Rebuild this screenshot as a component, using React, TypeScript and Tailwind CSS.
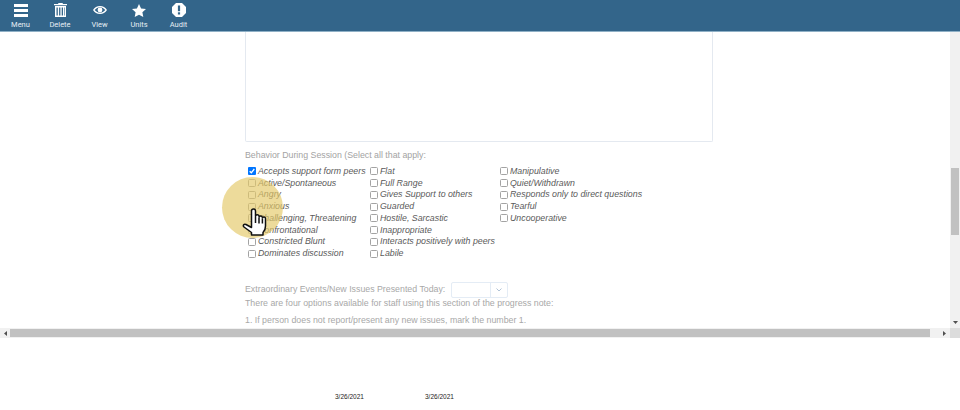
const columns = [
  { width: 'w-[122px]', items: ['Accepts support form peers', 'Active/Spontaneous', 'Angry', 'Anxious', 'Challenging, Threatening', 'Confrontational', 'Constricted Blunt', 'Dominates discussion'] },
  { width: 'w-[130px]', items: ['Flat', 'Full Range', 'Gives Support to others', 'Guarded', 'Hostile, Sarcastic', 'Inappropriate', 'Interacts positively with peers', 'Labile'] },
  { width: 'w-[160px]', items: ['Manipulative', 'Quiet/Withdrawn', 'Responds only to direct questions', 'Tearful', 'Uncooperative'] },
];

function MenuIcon() {
  return (
    <svg width="14" height="13" viewBox="0 0 14 13" fill="white">
      <rect x="0" y="0" width="14" height="3" />
      <rect x="0" y="5" width="14" height="3" />
      <rect x="0" y="10" width="14" height="3" />
    </svg>
  );
}

function TrashIcon() {
  return (
    <svg width="13" height="14" viewBox="0 0 13 14" fill="white">
      <path d="M4.500 0h4l.5 1h4v1.200H0V1h4z" />
      <path fillRule="evenodd" d="M1 3h11v11H1zM2.500 4.500v8h1.300v-8zM5.100 4.500v8h1.300v-8zM7.700 4.500v8H9v-8zM10 4.500v8h.6v-8z" />
    </svg>
  );
}

function EyeIcon() {
  return (
    <svg width="14" height="8" viewBox="0 0 14 8" fill="white">
      <path fillRule="evenodd" d="M7 0c3 0 5.400 1.600 7 4-1.600 2.400-4 4-7 4S1.600 6.400 0 4c1.600-2.400 4-4 7-4zM1.700 4C3 5.500 4.900 6.800 7 6.800S11 5.500 12.300 4C11 2.500 9.100 1.200 7 1.200S3 2.500 1.700 4z" />
      <circle cx="7" cy="4" r="2.400" />
    </svg>
  );
}

function StarIcon() {
  return (
    <svg width="14" height="13" viewBox="0 0 14 13" fill="white">
      <path d="M7 0l2.100 4.400 4.900.6-3.600 3.300.9 4.700L7 10.700 2.700 13l.9-4.700L0 5l4.900-.6z" />
    </svg>
  );
}

function AuditIcon() {
  return (
    <svg width="14" height="14" viewBox="0 0 14 14">
      <path fill="white" d="M4 0h6l4 4v6l-4 4H4l-4-4V4z" />
      <rect x="5.900" y="2.500" width="2.200" height="5.700" fill="#33658a" />
      <rect x="5.900" y="9.300" width="2.200" height="2.200" fill="#33658a" />
    </svg>
  );
}

const tools = [
  { label: 'Menu', icon: <MenuIcon />, width: 'w-[39px]' },
  { label: 'Delete', icon: <TrashIcon />, width: 'w-[40px]' },
  { label: 'View', icon: <EyeIcon />, width: 'w-[39px]' },
  { label: 'Units', icon: <StarIcon />, width: 'w-[40px]' },
  { label: 'Audit', icon: <AuditIcon />, width: 'w-[39px]' },
];

function Box({ checked }: { checked: boolean }) {
  if (checked) {
    return (
      <div className="flex h-[8px] w-[8px] shrink-0 items-center justify-center rounded-[1px] bg-[#0075ff]">
        <svg width="6" height="6" viewBox="0 0 6 6" fill="none" stroke="white" strokeWidth="1.300">
          <path d="M0.700 3.200L2.300 4.800 5.300 1" />
        </svg>
      </div>
    );
  }
  return <div className="h-[8px] w-[8px] shrink-0 rounded-[1.500px] border border-[#a3a3a3] bg-white/20" />;
}

function HandCursor() {
  return (
    <svg className="absolute left-[242px] top-[208px]" width="25" height="29" viewBox="0 0 25 29" fill="white" stroke="#111" strokeWidth="1.500" strokeLinejoin="round">
      <path d="M9.500 3a2 2 0 0 1 4 0v5.500a1.800 1.800 0 0 1 3.600 0v.6a1.700 1.700 0 0 1 3.300.4v.5a1.600 1.600 0 0 1 3.100.5V18c0 3-1 5-2.500 6.500V27H9.500v-2.500L2 19c-1.500-1.500 0-3.500 2-2.500l5.500 3z" />
      <path d="M13.500 9v6M17 9.500v6M20.400 10.500v5" fill="none" />
    </svg>
  );
}

export default function App() {
  return (
    <div className="relative h-[410px] w-[960px] overflow-hidden bg-white font-['Roboto',sans-serif]">
      {/* Toolbar */}
      <div className="flex h-[32px] border-b border-[#8fb0c6] bg-[#33658a] pl-[1px]">
        {tools.map((t) => (
          <div key={t.label} className={`flex flex-col items-center ${t.width}`}>
            <div className="flex h-[20px] items-center">{t.icon}</div>
            <span className="text-[7.5px] leading-[9px] text-[#e6eef4]">{t.label}</span>
          </div>
        ))}
      </div>

      {/* Scrollable form */}
      <div className="flex h-[296px]">
        <div className="w-[950px] overflow-hidden pl-[245px] font-['Liberation_Sans',sans-serif]">
          <div className="h-[110px] w-[468px] rounded-b-[2px] border border-t-0 border-[#e4e9f0]" />
          <p className="mt-[8px] text-[8.8px] leading-[11px] text-[#a3a3a3]">Behavior During Session (Select all that apply:</p>
          <div className="mt-[4.500px] flex">
            {columns.map((col) => (
              <div key={col.width} className={`flex flex-col pl-[3px] ${col.width}`}>
                {col.items.map((item) => (
                  <div key={item} className="flex h-[11.75px] items-center gap-[2px] whitespace-nowrap">
                    <Box checked={item === 'Accepts support form peers'} />
                    <span className="text-[8.8px] italic leading-[11px] text-[#5a5a5a]">{item}</span>
                  </div>
                ))}
              </div>
            ))}
          </div>
          <div className="mt-[22px] flex h-[16px] items-center text-[8.8px] text-[#a8a8a8]">
            <span>Extraordinary Events/New Issues Presented Today:</span>
            <div className="ml-[6px] flex h-[16px] w-[57px] rounded-[2px] border border-[#e4ecf5]">
              <div className="flex-1 border-r border-[#e4ecf5]" />
              <div className="flex w-[16px] items-center justify-center">
                <svg width="6" height="4" viewBox="0 0 6 4" fill="none" stroke="#9db4cc" strokeWidth="0.8">
                  <path d="M0.500 0.500L3 3l2.500-2.500" />
                </svg>
              </div>
            </div>
          </div>
          <p className="text-[8.8px] leading-[11px] text-[#a8a8a8]">There are four options available for staff using this section of the progress note:</p>
          <p className="mt-[6px] text-[8.8px] leading-[11px] text-[#a8a8a8]">1. If person does not report/present any new issues, mark the number 1.</p>
        </div>

        {/* Vertical scrollbar */}
        <div className="flex w-[10px] flex-col bg-[#f1f1f1]">
          <div className="h-[136px]" />
          <div className="mx-auto h-[67px] w-[8px] bg-[#c1c1c1]" />
          <div className="flex-1" />
          <div className="flex h-[12px] items-center justify-center">
            <svg width="5" height="3" viewBox="0 0 5 3" fill="#505050"><path d="M0 0h5L2.500 3z" /></svg>
          </div>
        </div>
      </div>

      {/* Horizontal scrollbar */}
      <div className="flex h-[10px] bg-[#f1f1f1]">
        <div className="flex w-[10px] items-center justify-center">
          <svg width="3" height="5" viewBox="0 0 3 5" fill="#505050"><path d="M3 0v5L0 2.500z" /></svg>
        </div>
        <div className="my-[1px] w-[920px] bg-[#c1c1c1]" />
        <div className="flex w-[20px] items-center justify-center pl-[8px]">
          <svg width="3" height="5" viewBox="0 0 3 5" fill="#505050"><path d="M0 0v5l3-2.500z" /></svg>
        </div>
        <div className="w-[10px] bg-[#dcdcdc]" />
      </div>

      {/* Dates */}
      <div className="mt-[54px] flex pl-[335px] font-['Liberation_Sans',sans-serif] text-[6.5px] leading-[9px] text-[#222]">
        <span className="w-[90px]">3/26/2021</span>
        <span>3/26/2021</span>
      </div>

      {/* Cursor highlight */}
      <div className="absolute left-[222px] top-[177px] h-[61px] w-[61px] rounded-full bg-[#e3c866]/65" />
      <HandCursor />
    </div>
  );
}
